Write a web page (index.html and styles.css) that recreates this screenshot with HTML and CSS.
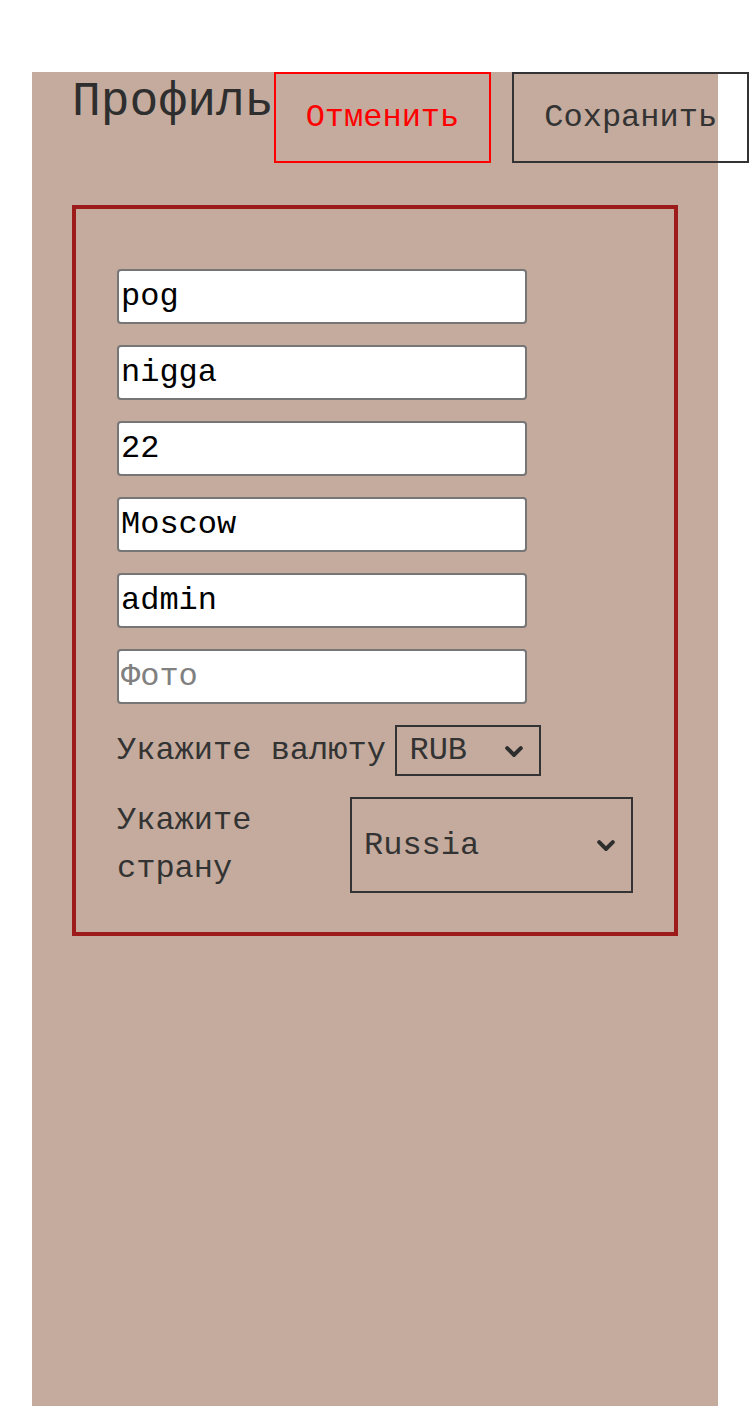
FILE: index.html
```html
<!DOCTYPE html>
<html lang="ru">
<head>
<meta charset="utf-8">
<title>Профиль</title>
<link rel="stylesheet" href="styles.css">
</head>
<body>
<div class="page">
  <div class="header">
    <h1 class="title">Профиль</h1>
    <button class="btn btn-cancel">Отменить</button>
    <button class="btn btn-save">Сохранить</button>
  </div>
  <div class="form">
    <input class="input" type="text" value="pog">
    <input class="input" type="text" value="nigga">
    <input class="input" type="text" value="22">
    <input class="input" type="text" value="Moscow">
    <input class="input" type="text" value="admin">
    <input class="input" type="text" placeholder="Фото">
    <div class="row row-currency">
      <label class="label">Укажите валюту</label>
      <span class="select-wrap select-wrap-currency">
        <select class="select">
          <option>RUB</option>
          <option>USD</option>
          <option>EUR</option>
        </select>
        <svg class="chevron" viewBox="0 0 18 11" width="18" height="11" aria-hidden="true"><polyline points="2.2,2.2 9,9 15.8,2.2" fill="none" stroke="#2e2e2e" stroke-width="4" stroke-linecap="round" stroke-linejoin="miter"/></svg>
      </span>
    </div>
    <div class="row row-country">
      <label class="label label-country">Укажите страну</label>
      <span class="select-wrap select-wrap-country">
        <select class="select">
          <option>Russia</option>
          <option>Belarus</option>
          <option>Kazakhstan</option>
        </select>
        <svg class="chevron" viewBox="0 0 18 11" width="18" height="11" aria-hidden="true"><polyline points="2.2,2.2 9,9 15.8,2.2" fill="none" stroke="#2e2e2e" stroke-width="4" stroke-linecap="round" stroke-linejoin="miter"/></svg>
      </span>
    </div>
  </div>
</div>
</body>
</html>
```

FILE: styles.css
```css
html, body {
  margin: 0;
  padding: 0;
  background: #ffffff;
}

body {
  font-family: "Courier New", "Nimbus Mono PS", "Nimbus Mono L", "FreeMono", Courier, "Liberation Mono", monospace;
  color: #333333;
}

.page {
  margin: 72px 32px 0;
  min-height: 1334px;
  padding: 0 40px;
  background: #c4ab9d;
  box-sizing: border-box;
}

.header {
  display: flex;
  align-items: flex-start;
}

.title {
  flex-shrink: 0;
  margin: 3px 0 0;
  font-size: 48px;
  font-weight: normal;
  line-height: normal;
  color: #2e2e2e;
}

.btn {
  flex-shrink: 0;
  padding: 25px 30px;
  font-family: inherit;
  font-size: 32px;
  line-height: normal;
  background: transparent;
  border: 2px solid;
  border-radius: 0;
}

.btn-cancel {
  color: #ff0000;
  border-color: #ff0000;
}

.btn-save {
  margin-left: 21px;
  color: #333333;
  border-color: #333333;
}

.form {
  display: flex;
  flex-direction: column;
  align-items: flex-start;
  gap: 21px;
  margin-top: 42px;
  padding: 60px 41px 39px;
  border: 4px solid #9e1b1b;
}

.input {
  box-sizing: border-box;
  width: 410px;
  height: 55px;
  padding: 0 2px;
  font-family: inherit;
  font-size: 32px;
  color: #000000;
  background: #ffffff;
  border: 2px solid #767676;
  border-radius: 4px;
}

.input::placeholder {
  color: #808080;
}

.row {
  display: flex;
}

.row-currency {
  align-items: center;
  gap: 9.6px;
}

.row-country {
  align-self: stretch;
  justify-content: space-between;
}

.label {
  font-size: 32px;
  line-height: 1.5;
  color: #333333;
}

.label-country {
  flex: 1 1 auto;
  min-width: 0;
}

.select-wrap {
  position: relative;
  display: flex;
  flex-shrink: 0;
}

.select-wrap-currency {
  width: 146px;
  height: 51px;
}

.select-wrap-country {
  width: 283px;
}

.select {
  box-sizing: border-box;
  width: 100%;
  height: 100%;
  padding: 0 12px;
  font-family: inherit;
  font-size: 32px;
  color: #333333;
  background: transparent;
  border: 2px solid #333333;
  border-radius: 0;
  appearance: none;
  -webkit-appearance: none;
}

.chevron {
  position: absolute;
  top: 50%;
  right: 18px;
  margin-top: -5px;
  pointer-events: none;
}
```
